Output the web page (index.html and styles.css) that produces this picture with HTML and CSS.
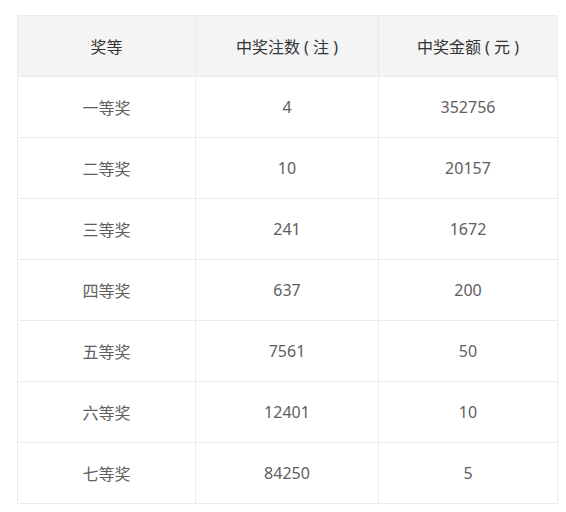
FILE: index.html
```html
<!DOCTYPE html>
<html lang="zh-CN">
<head>
<meta charset="utf-8">
<link rel="stylesheet" href="styles.css">
</head>
<body>
<div class="table">
  <div class="cell head">奖等</div><div class="cell head">中奖注数 ( 注 )</div><div class="cell head">中奖金额 ( 元 )</div>
  <div class="cell">一等奖</div><div class="cell">4</div><div class="cell">352756</div>
  <div class="cell">二等奖</div><div class="cell">10</div><div class="cell">20157</div>
  <div class="cell">三等奖</div><div class="cell">241</div><div class="cell">1672</div>
  <div class="cell">四等奖</div><div class="cell">637</div><div class="cell">200</div>
  <div class="cell">五等奖</div><div class="cell">7561</div><div class="cell">50</div>
  <div class="cell">六等奖</div><div class="cell">12401</div><div class="cell">10</div>
  <div class="cell">七等奖</div><div class="cell">84250</div><div class="cell">5</div>
</div>
</body>
</html>
```
FILE: styles.css
```css
html, body {
  margin: 0;
  background: #fff;
}
body {
  padding: 15px 0 0 17px;
  font-family: "Noto Sans", "Noto Sans CJK SC", sans-serif;
  font-size: 16px;
}
.table {
  display: grid;
  grid-template-columns: 178px 183px 179px;
  width: 541px;
  box-sizing: border-box;
  border-top: 1px solid #ebebeb;
  border-left: 1px solid #ebebeb;
}
.cell {
  box-sizing: border-box;
  height: 61px;
  border-right: 1px solid #ebebeb;
  border-bottom: 1px solid #ebebeb;
  display: flex;
  align-items: center;
  justify-content: center;
  color: #606060;
  white-space: pre;
}
.head {
  background: #f4f4f4;
  color: #333;
}
```
